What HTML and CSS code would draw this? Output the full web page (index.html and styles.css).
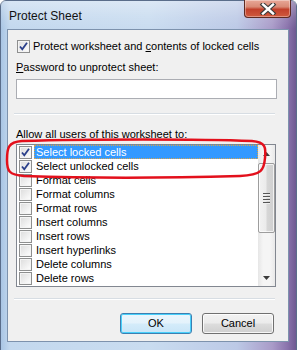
FILE: index.html
```html
<!DOCTYPE html>
<html>
<head>
<meta charset="utf-8">
<link rel="stylesheet" href="styles.css">
</head>
<body>
<div class="window">
  <div class="titlebar">
    <span class="title">Protect Sheet</span>
    <div class="close">
      <svg width="18" height="12" viewBox="0 0 18 12">
        <path d="M4 1.5 L14 10.5 M14 1.5 L4 10.5" stroke="#3c3c3c" stroke-width="4.6" stroke-linecap="square" fill="none"/>
        <path d="M4 1.5 L14 10.5 M14 1.5 L4 10.5" stroke="#ffffff" stroke-width="2.4" stroke-linecap="square" fill="none"/>
      </svg>
    </div>
  </div>
  <div class="panel">
    <div class="opt-row">
      <span class="cb checked"><svg width="11" height="11" viewBox="0 0 11 11"><path d="M2 5.5 L4.3 8.3 L9 1.8" stroke="#2a3f8a" stroke-width="1.8" fill="none"/></svg></span>
      <span>Protect worksheet and <u>c</u>ontents of locked cells</span>
    </div>
    <div class="label pw-label"><u>P</u>assword to unprotect sheet:</div>
    <div class="input"></div>
    <div class="sep sep-top"></div>
    <div class="label allow-label">Allow all users of this worksheet t<u>o</u>:</div>
    <div class="listbox">
      <div class="items">
        <div class="item"><span class="cb checked"><svg width="11" height="11" viewBox="0 0 11 11"><path d="M2 5.5 L4.3 8.3 L9 1.8" stroke="#2a3f8a" stroke-width="1.8" fill="none"/></svg></span><span class="txt sel">Select locked cells</span></div>
        <div class="item"><span class="cb checked"><svg width="11" height="11" viewBox="0 0 11 11"><path d="M2 5.5 L4.3 8.3 L9 1.8" stroke="#2a3f8a" stroke-width="1.8" fill="none"/></svg></span><span class="txt">Select unlocked cells</span></div>
        <div class="item"><span class="cb"></span><span class="txt">Format cells</span></div>
        <div class="item"><span class="cb"></span><span class="txt">Format columns</span></div>
        <div class="item"><span class="cb"></span><span class="txt">Format rows</span></div>
        <div class="item"><span class="cb"></span><span class="txt">Insert columns</span></div>
        <div class="item"><span class="cb"></span><span class="txt">Insert rows</span></div>
        <div class="item"><span class="cb"></span><span class="txt">Insert hyperlinks</span></div>
        <div class="item"><span class="cb"></span><span class="txt">Delete columns</span></div>
        <div class="item"><span class="cb"></span><span class="txt">Delete rows</span></div>
      </div>
      <div class="scrollbar">
        <div class="arrow"><svg width="7" height="4" viewBox="0 0 7 4"><path d="M0 4 L3.5 0 L7 4 Z" fill="#3c3c3c"/></svg></div>
        <div class="track">
          <div class="thumb">
            <div class="grip"></div><div class="grip"></div><div class="grip"></div><div class="grip"></div>
          </div>
        </div>
        <div class="arrow"><svg width="7" height="4" viewBox="0 0 7 4"><path d="M0 0 L7 0 L3.5 4 Z" fill="#3c3c3c"/></svg></div>
      </div>
    </div>
    <div class="sep sep-bottom"></div>
    <div class="buttons">
      <div class="btn default">OK</div>
      <div class="btn">Cancel</div>
    </div>
  </div>
  <svg class="annot" width="297" height="60" viewBox="0 0 297 60">
    <path d="M22 3 C90 1 200 1 252 3 C266 4 266 10 265 20 C264 32 262 37 240 38 C170 40 80 40 24 38 C9 37 7 33 7 22 C7 10 8 4 22 3 Z" stroke="#e3101c" stroke-width="2.5" fill="none"/>
  </svg>
</div>
</body>
</html>
```
FILE: styles.css
```css
html, body {
  margin: 0;
  padding: 0;
}
body {
  width: 297px;
  height: 350px;
  overflow: hidden;
  font-family: "Liberation Sans", Arial, sans-serif;
  font-size: 11px;
  color: #000;
}
.window {
  position: relative;
  width: 297px;
  height: 350px;
  box-sizing: border-box;
  background: linear-gradient(90deg, #a9c5e4 0%, #c3d8ee 3%, #c9dcf0 50%, #bcc9e6 80%, #a99bc8 92%, #8b74ad 97%, #6f5a92 100%);
  border-radius: 6px 6px 0 0;
  border: 1px solid #5a6d8a;
  border-bottom: none;
  display: flex;
  flex-direction: column;
}
.titlebar {
  height: 28px;
  display: flex;
  align-items: flex-start;
  justify-content: space-between;
  background: linear-gradient(180deg, rgba(255,255,255,0.35) 0%, rgba(255,255,255,0.1) 60%, rgba(255,255,255,0) 100%);
}
.title {
  font-size: 12px;
  margin-left: 8px;
  margin-top: 8px;
  line-height: 15px;
  color: #111;
}
.close {
  width: 47px;
  height: 18px;
  margin-right: 5px;
  margin-top: -1px;
  box-sizing: border-box;
  border: 1px solid #5e2a22;
  border-top: none;
  border-radius: 0 0 4px 4px;
  background: linear-gradient(180deg, #e8a898 0%, #d98a76 40%, #c2402b 55%, #cf5a3e 100%);
  box-shadow: inset 0 0 0 1px rgba(255,255,255,0.35);
  display: flex;
  align-items: center;
  justify-content: center;
}
.panel {
  margin-left: 6px;
  width: 282px;
  height: 313px;
  box-sizing: border-box;
  border: 1px solid #7d92ad;
  background: #f0f0f0;
  display: flex;
  flex-direction: column;
}
.cb {
  width: 13px;
  height: 13px;
  box-sizing: border-box;
  border: 1px solid #8e8f8f;
  background: linear-gradient(135deg, #dcdcdc 0%, #f4f4f4 70%, #ffffff 100%);
  box-shadow: inset 0 0 0 1px #f4f4f4;
  flex: none;
  display: flex;
  align-items: center;
  justify-content: center;
}
.cb svg {
  display: block;
}
.opt-row {
  display: flex;
  align-items: center;
  height: 13px;
  line-height: 13px;
  margin-top: 10px;
  margin-left: 9px;
  gap: 3px;
}
.label {
  line-height: 13px;
  margin-left: 8px;
}
.pw-label {
  margin-top: 8px;
}
.input {
  margin-top: 5px;
  margin-left: 8px;
  width: 261px;
  height: 20px;
  box-sizing: border-box;
  border: 1px solid #abadb3;
  border-top-color: #abadb3;
  background: #fff;
}
.sep {
  margin-left: 6px;
  width: 261px;
  height: 1px;
  background: #d7dde3;
  border-bottom: 1px solid #ffffff;
}
.sep-top {
  margin-top: 14px;
}
.allow-label {
  margin-top: 13px;
}
.listbox {
  margin-top: 3px;
  margin-left: 8px;
  width: 260px;
  height: 143px;
  box-sizing: border-box;
  border: 1px solid #828790;
  background: #fff;
  display: flex;
}
.items {
  flex: 1;
  display: flex;
  flex-direction: column;
}
.item {
  height: 14px;
  display: flex;
  align-items: center;
  padding-left: 2px;
  gap: 2px;
}
.item .txt {
  flex: 1;
  height: 14px;
  line-height: 14px;
  padding-left: 2px;
  box-sizing: border-box;
  white-space: nowrap;
}
.item .txt.sel {
  background: #3399ff;
  color: #fff;
  outline: 1px dotted #d9a44a;
  outline-offset: -1px;
}
.scrollbar {
  width: 17px;
  display: flex;
  flex-direction: column;
  background: linear-gradient(90deg, #e6e6e6 0%, #f5f5f5 30%, #f5f5f5 70%, #e9e9e9 100%);
}
.arrow {
  height: 17px;
  display: flex;
  align-items: center;
  justify-content: center;
}
.track {
  flex: 1;
  display: flex;
  flex-direction: column;
}
.thumb {
  margin-top: 1px;
  margin-left: 0;
  height: 70px;
  box-sizing: border-box;
  border: 1px solid #9d9d9d;
  border-radius: 2px;
  background: linear-gradient(90deg, #f2f2f2 0%, #ebebeb 45%, #d6d6d6 55%, #cfcfcf 100%);
  box-shadow: inset 0 0 0 1px rgba(255,255,255,0.7);
  display: flex;
  flex-direction: column;
  align-items: center;
  justify-content: center;
  gap: 1px;
}
.grip {
  width: 7px;
  height: 1px;
  background: #555;
  border-bottom: 1px solid #eee;
}
.sep-bottom {
  margin-top: 11px;
}
.buttons {
  margin-top: 13px;
  display: flex;
  justify-content: flex-end;
  gap: 10px;
  padding-right: 14px;
}
.btn {
  width: 72px;
  height: 21px;
  box-sizing: border-box;
  border: 1px solid #707070;
  border-radius: 3px;
  background: linear-gradient(180deg, #f2f2f2 0%, #ebebeb 49%, #dddddd 51%, #cfcfcf 100%);
  box-shadow: inset 0 0 0 1px rgba(255,255,255,0.8);
  text-align: center;
  line-height: 19px;
}
.btn.default {
  border-color: #3c7fb1;
  box-shadow: inset 0 0 0 1px #48d0fb;
  background: linear-gradient(180deg, #eaf6fd 0%, #e4f2fb 49%, #d4ecfa 51%, #c9e5f7 100%);
}
.annot {
  position: absolute;
  left: -1px;
  top: 137px;
}
```
